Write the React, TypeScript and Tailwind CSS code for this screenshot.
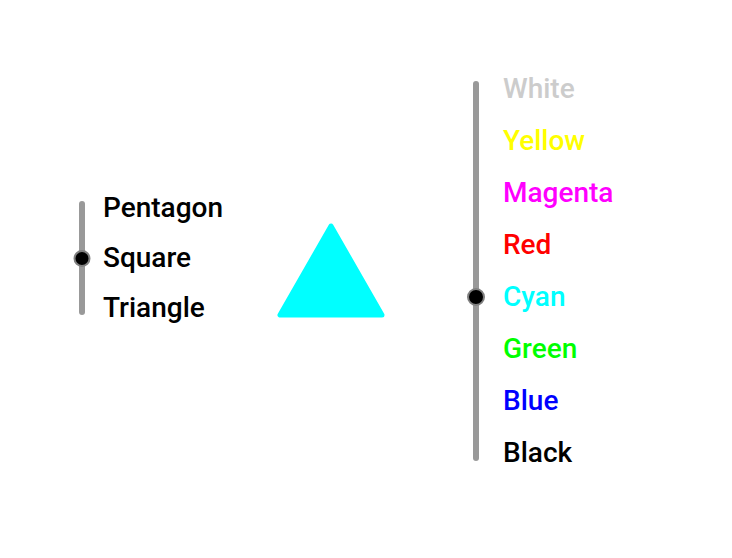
type Option = { label: string; color: string };

const SHAPES: Option[] = [
  { label: 'Pentagon', color: '#000000' },
  { label: 'Square', color: '#000000' },
  { label: 'Triangle', color: '#000000' },
];

const COLORS: Option[] = [
  { label: 'White', color: '#cccccc' },
  { label: 'Yellow', color: '#ffff00' },
  { label: 'Magenta', color: '#ff00ff' },
  { label: 'Red', color: '#ff0000' },
  { label: 'Cyan', color: '#00ffff' },
  { label: 'Green', color: '#00ff00' },
  { label: 'Blue', color: '#0000ff' },
  { label: 'Black', color: '#000000' },
];

function VerticalPicker({
  options,
  selected,
  rowHeight,
  thumb,
  gapClass,
}: {
  options: Option[];
  selected: number;
  rowHeight: number;
  thumb: number;
  gapClass: string;
}) {
  return (
    <div className={`flex ${gapClass}`}>
      {/* track + thumb */}
      <div className="relative flex w-[16px] justify-center py-[18px]">
        <div className="h-full w-[6px] rounded-full bg-[#999999]" />
        <div
          className="absolute left-1/2 -translate-x-1/2 rounded-full border-2 border-[#808080] bg-black"
          style={{
            top: rowHeight * selected + rowHeight / 2 - thumb / 2,
            width: thumb,
            height: thumb,
          }}
        />
      </div>
      <div className="flex flex-col">
        {options.map((o) => (
          <div
            key={o.label}
            className="flex items-center text-[28px] font-medium leading-none"
            style={{ height: rowHeight, color: o.color }}
          >
            {o.label}
          </div>
        ))}
      </div>
    </div>
  );
}

export default function App() {
  return (
    <div className="flex h-[558px] w-[732px] items-start bg-white font-['Roboto',sans-serif]">
      <div className="ml-[74px] mt-[183px] w-[180px]">
        <VerticalPicker options={SHAPES} selected={1} rowHeight={50} thumb={17} gapClass="gap-[13px]" />
      </div>

      <svg className="ml-[22px] mt-[221px]" width="110" height="100" viewBox="0 0 110 100">
        <polygon
          points="55,5 4,94 106,94"
          fill="#00ffff"
          stroke="#00ffff"
          strokeWidth="5"
          strokeLinejoin="round"
        />
      </svg>

      <div className="ml-[82px] mt-[63px]">
        <VerticalPicker options={COLORS} selected={4} rowHeight={52} thumb={18} gapClass="gap-[19px]" />
      </div>
    </div>
  );
}
